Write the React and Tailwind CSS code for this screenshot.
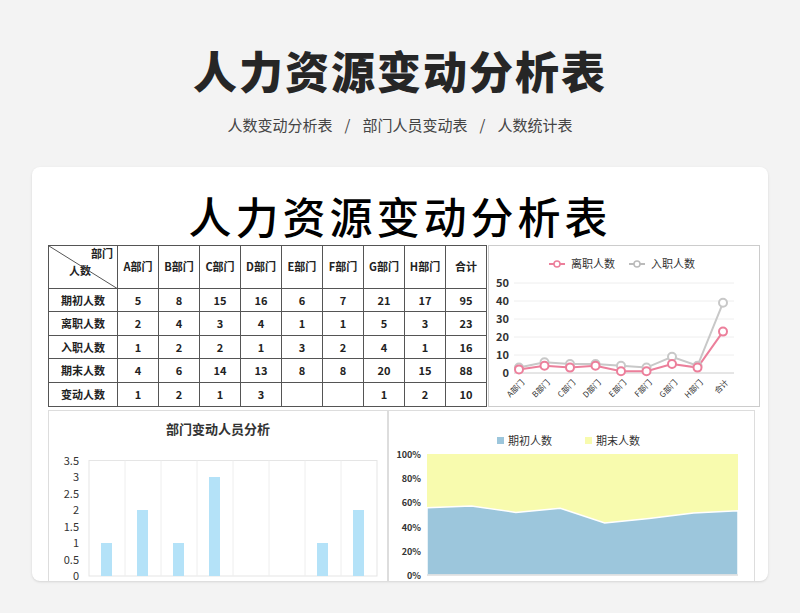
const F = { fontFamily: '"Noto Sans CJK SC","Noto Sans",sans-serif' };
const cols = ["A部门","B部门","C部门","D部门","E部门","F部门","G部门","H部门","合计"];
const rows = [
  ["期初人数",5,8,15,16,6,7,21,17,95],
  ["离职人数",2,4,3,4,1,1,5,3,23],
  ["入职人数",1,2,2,1,3,2,4,1,16],
  ["期末人数",4,6,14,13,8,8,20,15,88],
  ["变动人数",1,2,1,3,"","",1,2,10],
];

function LineChart() {
  const leave = [2,4,3,4,1,1,5,3,23], join = [3,6,5,5,4,3,9,4,39];
  const x0 = 30, dx = 25.5, yb = 127, ys = 1.8;
  const pts = a => a.map((v,i)=>[x0+dx*i, yb - v*ys]);
  const pl = a => pts(a).map(p=>p.join(",")).join(" ");
  return (
    <svg width="270" height="160" style={F}>
      <line x1="60" y1="18" x2="76" y2="18" stroke="#ec7f9b" strokeWidth="2"/><circle cx="68" cy="18" r="3" fill="#fff" stroke="#ec7f9b" strokeWidth="1.5"/>
      <text x="82" y="22" fontSize="11" fill="#333">离职人数</text>
      <line x1="140" y1="18" x2="156" y2="18" stroke="#bbb" strokeWidth="2"/><circle cx="148" cy="18" r="3" fill="#fff" stroke="#bbb" strokeWidth="1.5"/>
      <text x="162" y="22" fontSize="11" fill="#333">入职人数</text>
      {[0,10,20,30,40,50].map(v=>(<g key={v}><line x1="25" x2="245" y1={yb-v*ys} y2={yb-v*ys} stroke={v?"#eee":"#ccc"}/><text x="20" y={yb-v*ys+4} fontSize="11" textAnchor="end" fill="#333" fontWeight="bold">{v}</text></g>))}
      <polyline points={pl(join)} fill="none" stroke="#c8c8c8" strokeWidth="2"/>
      <polyline points={pl(leave)} fill="none" stroke="#ec7f9b" strokeWidth="2"/>
      {pts(join).map((p,i)=><circle key={"j"+i} cx={p[0]} cy={p[1]} r="4" fill="#fff" stroke="#c8c8c8" strokeWidth="2"/>)}
      {pts(leave).map((p,i)=><circle key={"l"+i} cx={p[0]} cy={p[1]} r="4" fill="#fff" stroke="#ec7f9b" strokeWidth="2"/>)}
      {cols.map((c,i)=><text key={c} x={x0+dx*i+6} y={yb+10} fontSize="8" fill="#333" textAnchor="end" transform={`rotate(-45 ${x0+dx*i+6} ${yb+10})`}>{c}</text>)}
    </svg>
  );
}

function BarChart() {
  const vals = [1,2,1,3,0,0,1,2];
  const x0 = 40, w = 36, yb = 165, s = 33;
  return (
    <svg width="338" height="172" style={F}>
      <text x="169" y="23" fontSize="13" fontWeight="bold" textAnchor="middle" fill="#333">部门变动人员分析</text>
      <rect x={x0} y={yb-3.5*s} width={w*8} height={3.5*s} fill="none" stroke="#e5e5e5"/>
      {[1,2,3,4,5,6,7].map(i=><line key={i} x1={x0+w*i} x2={x0+w*i} y1={yb-3.5*s} y2={yb} stroke="#eee"/>)}
      {[0,0.5,1,1.5,2,2.5,3,3.5].map(v=><text key={v} x="30" y={yb-v*s+4} fontSize="11" textAnchor="end" fill="#333">{v}</text>)}
      {vals.map((v,i)=>v?<rect key={i} x={x0+w*i+12} y={yb-v*s} width="11" height={v*s} fill="#b4e2f8"/>:null)}
    </svg>
  );
}

function AreaChart() {
  const r = [.556,.571,.517,.552,.43,.467,.512,.53];
  const x0 = 38, x1 = 349, yt = 43, yb = 164;
  const dx = (x1-x0)/7;
  const top = r.map((v,i)=>`${x0+dx*i},${yb-(yb-yt)*v}`).join(" ");
  return (
    <svg width="366" height="172" style={F}>
      <rect x="108" y="26" width="7" height="7" fill="#9cc6dc"/><text x="119" y="34" fontSize="11" fill="#333">期初人数</text>
      <rect x="196" y="26" width="7" height="7" fill="#f8fbae"/><text x="207" y="34" fontSize="11" fill="#333">期末人数</text>
      <polygon points={`${x0},${yt} ${x1},${yt} ${x1},${yb} ${x0},${yb}`} fill="#f8fbae"/>
      <polygon points={`${x0},${yb} ${top} ${x1},${yb}`} fill="#9cc6dc" stroke="#fff" strokeWidth="1.5"/>
      {[0,20,40,60,80,100].map(v=><text key={v} x="32" y={yb-(yb-yt)*v/100+4} fontSize="9" textAnchor="end" fill="#333" fontWeight="bold">{v}%</text>)}
      <line x1={x0} x2={x1} y1={yb} y2={yb} stroke="#ccc"/>
    </svg>
  );
}

export default function App() {
  return (
    <div className="w-[800px] h-[613px] overflow-hidden bg-[#f3f3f3] flex flex-col items-center" style={F}>
      <h1 className="mt-[42px] text-[44px] leading-[56px] font-black text-[#262626] tracking-[2px]">人力资源变动分析表</h1>
      <div className="mt-[16px] text-[15px] text-[#444] flex gap-[12px]">
        <span>人数变动分析表</span><span>/</span><span>部门人员变动表</span><span>/</span><span>人数统计表</span>
      </div>
      <div className="mt-[30px] w-[736px] h-[414px] bg-white rounded-[8px] shadow-sm flex flex-col items-center overflow-hidden">
        <div className="mt-[18px] text-[43px] leading-[60px] font-medium text-black tracking-[4px]">人力资源变动分析表</div>
        <div className="flex self-start ml-[16px]">
          <table className="border-collapse text-[11px] text-[#222] font-semibold text-center" style={F}>
            <thead>
              <tr className="h-[43px]">
                <th className="border border-[#555] w-[69px] relative p-0">
                  <svg className="absolute inset-0" width="69" height="43"><line x1="0" y1="0" x2="69" y2="43" stroke="#555"/></svg>
                  <div className="text-right pr-[4px] -mt-[10px] font-semibold">部门</div>
                  <div className="text-left pl-[20px] font-semibold">人数</div>
                </th>
                {cols.map(c=><th key={c} className="border border-[#555] w-[41px] p-0 font-semibold">{c}</th>)}
              </tr>
            </thead>
            <tbody>
              {rows.map(r=>(
                <tr key={r[0]} className="h-[23.6px]">
                  {r.map((v,i)=><td key={i} className="border border-[#555] p-0">{v}</td>)}
                </tr>
              ))}
            </tbody>
          </table>
          <div className="border border-[#ccc] w-[272px] h-[162px] ml-[1px]"><LineChart/></div>
        </div>
        <div className="flex self-start ml-[16px] mt-[3px]">
          <div className="border border-[#ddd] w-[340px] h-[174px]"><BarChart/></div>
          <div className="border border-[#ddd] w-[367px] h-[174px]"><AreaChart/></div>
        </div>
      </div>
    </div>
  );
}
